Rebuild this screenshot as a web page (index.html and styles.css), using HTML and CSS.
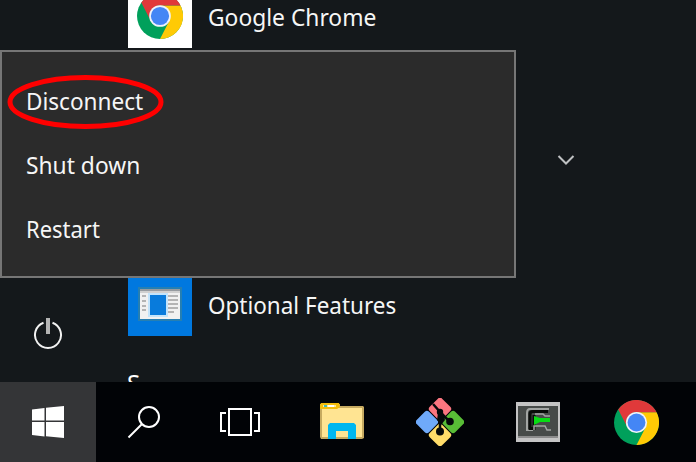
FILE: index.html
```html
<!DOCTYPE html>
<html lang="en">
<head>
<meta charset="utf-8">
<title>Start menu</title>
<link rel="stylesheet" href="styles.css">
</head>
<body>
<svg width="0" height="0" class="defs" aria-hidden="true">
  <symbol id="chrome" viewBox="0 0 48 48">
    <circle cx="24" cy="24" r="24" fill="#00a05b"/>
    <path d="M24 13H45.4A24 24 0 0 1 24 48L33.5 29.5Z" fill="#ffca05"/>
    <path d="M4.5 10A24 24 0 0 1 45.4 13H24A11 11 0 0 0 14.5 29.5Z" fill="#e0393a"/>
    <circle cx="24" cy="24" r="11.3" fill="#f0f3fa"/>
    <circle cx="24" cy="24" r="9.500" fill="#4486f5"/>
  </symbol>
</svg>
<div class="screen">
  <main class="start">
    <nav class="rail">
      <svg class="power" width="30" height="34" viewBox="0 0 30 34" fill="none">
        <path d="M10.500 5.800A13 13 0 1 0 19.500 5.800" stroke="#f2f2f2" stroke-width="2"/>
        <path d="M15 1V17" stroke="#b4b4b4" stroke-width="4"/>
      </svg>
    </nav>
    <section class="apps">
      <div class="app">
        <div class="tile white"><svg width="46" height="46"><use href="#chrome"/></svg></div>
        <span class="label google">Google Chrome</span>
      </div>
      <div class="app folder">
        <svg width="18" height="12" viewBox="0 0 18 12" fill="none"><path d="M1.500 2L9 9.500L16.500 2" stroke="#bfc1c3" stroke-width="2"/></svg>
      </div>
      <div class="app">
        <div class="tile blue">
          <svg width="44" height="34" viewBox="0 0 44 34">
            <rect width="44" height="34" fill="#267fb2"/>
            <rect x="2" y="2" width="40" height="30" fill="#f1f1f1"/>
            <path d="M2 2H42V4H2Z" fill="#969ba0"/>
            <path d="M2 4H42V6H2Z" fill="#d0d0d0"/>
            <rect x="10" y="6" width="20" height="24" fill="#c3e4fb"/>
            <rect x="12" y="8" width="16" height="20" fill="#087bdc"/>
            <path d="M4 9H8M4 14H8M4 19H8M4 23H8M30 9H40M30 13H40M30 17H40M30 21H40M30 25H36" stroke="#b4b4b4" stroke-width="2"/>
          </svg>
        </div>
        <span class="label optional">Optional Features</span>
      </div>
      <h2 class="letter">S</h2>
    </section>
  </main>

  <footer class="taskbar">
    <div class="slot active">
      <svg width="32" height="32" viewBox="0 0 32 32" fill="#fff"><path d="M0 3.500L12.500 2V14.500H0ZM14 1.800L32 0V14.500H14ZM0 16H12.500V30.500L0 29ZM14 16H32V32L14 30.200Z"/></svg>
    </div>
    <div class="slot">
      <svg class="search" width="34" height="34" viewBox="0 0 34 34" fill="none" stroke="#fff" stroke-width="2"><circle cx="22" cy="12" r="10"/><path d="M15 19L1.500 32.500"/></svg>
    </div>
    <div class="slot">
      <svg width="40" height="28" viewBox="0 0 40 28" fill="none" stroke="#fff" stroke-width="2"><path d="M9 1H31V27H9ZM6 5H1V23H6M34 5H39V23H34"/></svg>
    </div>
    <div class="apps-pinned">
      <div class="slot wide">
        <svg width="44" height="38" viewBox="0 0 44 38">
          <path d="M0 1H20V3H43L44 4V35L42 36H1L0 34Z" fill="#c6aa60"/>
          <path d="M2 5H42V34H2Z" fill="#ffe492"/>
          <path d="M1 0H19L20 4L17 6H0V2Z" fill="#f4bd0b"/>
          <path d="M3 2H16V4H3Z" fill="#ffe996"/><path d="M4 2H7V4H4Z" fill="#45bbb1"/><path d="M8 2H14V4H8Z" fill="#fff"/>
          <path d="M8 22L10 20H34L36 22V36H28V28H16V36H8Z" fill="#00b7f0"/>
        </svg>
      </div>
      <div class="slot wide">
        <svg class="git" width="48" height="48" viewBox="0 0 48 48">
          <g transform="translate(24 24) rotate(45)">
            <rect x="-18" y="-18" width="17.500" height="17.500" rx="3" fill="#fb7680"/>
            <rect x=".5" y="-18" width="17.500" height="17.500" rx="3" fill="#58bd36"/>
            <rect x="-18" y=".5" width="17.500" height="17.500" rx="3" fill="#6faafa"/>
            <rect x=".5" y=".5" width="17.500" height="17.500" rx="3" fill="#ffdc69"/>
          </g>
          <path d="M17 6L25 15L34 24M24 14V34" fill="none" stroke="#05090b" stroke-width="2.500"/>
          <circle cx="34" cy="23.500" r="3.800" fill="#05090b"/><circle cx="24" cy="33.500" r="4" fill="#05090b"/><circle cx="24" cy="14" r="3.200" fill="#05090b"/>
          <path d="M22 15H27L29 22L25 27L21 22Z" fill="#05090b"/>
        </svg>
      </div>
      <div class="slot wide">
        <svg width="44" height="40" viewBox="0 0 44 40">
          <rect width="44" height="40" fill="#c4c4c4"/>
          <rect x="2" y="4" width="40" height="30" fill="#474b49"/>
          <path d="M2 34H42V36H2Z" fill="#8c8c8c"/>
          <path d="M33 7H14Q11 7 11 11V28H17" fill="none" stroke="#a2a5a3" stroke-width="2"/>
          <path d="M32 9.500H17Q14 9.500 14 12V26.500H18V13" fill="none" stroke="#080b09" stroke-width="3"/>
          <path d="M19 12H27L29 14H34M18 28V24H29L31 28H35" fill="none" stroke="#a2a5a3" stroke-width="1.500"/>
          <path d="M18 14L24 16H34V20H24L18 23Z" fill="#08dd14"/>
        </svg>
      </div>
      <div class="slot wide"><svg width="45" height="45"><use href="#chrome"/></svg></div>
    </div>
  </footer>

  <div class="menu">
    <div class="item"><span class="label disconnect">Disconnect</span>
      <svg class="ring" width="158" height="56" viewBox="0 0 158 56"><ellipse cx="79.500" cy="28" rx="75.500" ry="24.500" fill="none" stroke="#f00" stroke-width="5"/></svg>
    </div>
    <div class="item"><span class="label shutdown">Shut down</span></div>
    <div class="item"><span class="label restart">Restart</span></div>
  </div>
</div>
</body>
</html>
```
FILE: styles.css
```css
* { box-sizing: border-box; }
body { margin: 0; background: #14181b; color: #fff; font-family: "Noto Sans", "Open Sans", sans-serif; font-size: 24px; }
.defs { position: absolute; }
.screen { position: relative; width: 696px; height: 462px; overflow: hidden; display: flex; flex-direction: column; }
.start { height: 382px; display: grid; grid-template-columns: 128px 1fr; overflow: hidden; background: #14181b; }
.rail { height: 382px; display: flex; align-items: flex-end; padding: 0 0 31px 33px; }
.power { display: block; }
.apps { display: flex; flex-direction: column; gap: 80px; margin-top: -16px; }
.app { height: 64px; flex: none; display: flex; align-items: center; gap: 16px; }
.folder { padding-left: 429px; }
.tile { width: 64px; height: 64px; display: flex; align-items: center; justify-content: center; }
.white { background: #fff; }
.blue { background: #0078df; }
.label { white-space: nowrap; line-height: 32px; padding-top: 2px; transform-origin: left center; color: #f6f6f6; }
.google { transform: scaleX(.95); }
.optional { transform: scaleX(.936); }
.disconnect { transform: scaleX(.94); }
.shutdown { transform: scaleX(.95); }
.restart { transform: scaleX(.915); }
.letter { margin: -49px 0 0 -1px; font-size: 24px; font-weight: 400; line-height: 32px; }
.taskbar { height: 80px; display: flex; background: #010306; }
.slot { width: 96px; flex: none; display: flex; align-items: center; justify-content: center; }
.apps-pinned { display: flex; padding-left: 5px; }
.wide { width: 98px; }
.active { background: #343537; }
.menu { position: absolute; left: 0; top: 50px; width: 516px; height: 228px; padding: 16px 0; background: #2b2b2b; border: 2px solid #767676; }
.item { position: relative; height: 64px; display: flex; align-items: center; padding-left: 24px; }
.ring { position: absolute; left: 4px; top: 6px; }
```
